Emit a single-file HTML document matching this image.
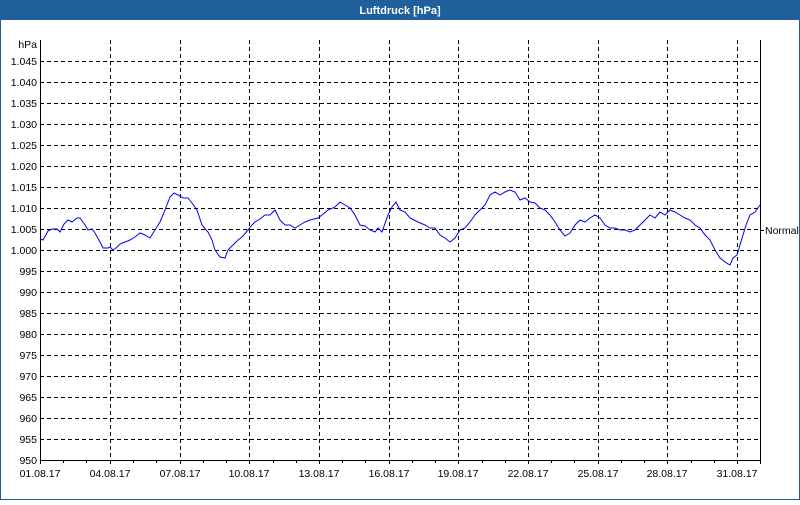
<!DOCTYPE html>
<html><head><meta charset="utf-8"><style>
body{margin:0;width:800px;height:500px;overflow:hidden;background:#fff;font-family:"Liberation Sans",sans-serif}
</style></head><body>
<svg width="800" height="500" xmlns="http://www.w3.org/2000/svg" font-family="Liberation Sans, sans-serif" font-size="10.5">
<rect x="0" y="0" width="800" height="500" fill="#fff"/>
<rect x="0.5" y="0.5" width="799" height="499" fill="none" stroke="#1f5f9a"/>
<rect x="0" y="0" width="800" height="20" fill="#1f5f9a"/>
<text x="400" y="14" text-anchor="middle" fill="#fff" font-weight="bold" font-size="11">Luftdruck [hPa]</text>
<g stroke="#000" stroke-dasharray="4,3" stroke-width="1">
<path d="M40 61.5H760M40 82.5H760M40 103.5H760M40 124.5H760M40 145.5H760M40 166.5H760M40 187.5H760M40 208.5H760M40 229.5H760M40 250.5H760M40 271.5H760M40 292.5H760M40 313.5H760M40 334.5H760M40 355.5H760M40 376.5H760M40 397.5H760M40 418.5H760M40 439.5H760"/>
<path d="M110.5 40V460M180.5 40V460M249.5 40V460M319.5 40V460M389.5 40V460M458.5 40V460M528.5 40V460M598.5 40V460M667.5 40V460M737.5 40V460"/>
</g>
<g stroke="#000" fill="none">
<path d="M40.5 40V460.5H760M760.5 40V460.5"/>
<path d="M760 230.5H764"/>
<path d="M40.5 460v4M63.5 460v3M86.5 460v3M110.5 460v4M133.5 460v3M156.5 460v3M180.5 460v4M203.5 460v3M226.5 460v3M249.5 460v4M273.5 460v3M296.5 460v3M319.5 460v4M342.5 460v3M365.5 460v3M389.5 460v4M412.5 460v3M435.5 460v3M458.5 460v4M482.5 460v3M505.5 460v3M528.5 460v4M551.5 460v3M574.5 460v3M598.5 460v4M621.5 460v3M644.5 460v3M667.5 460v4M691.5 460v3M714.5 460v3M737.5 460v4M760.5 460v4"/>
</g>
<polyline fill="none" stroke="#0000ee" stroke-width="1" points="40,239 43,240 48,231 52,229 57,229 60,232 64,224 68,220 72,222 77,218 80,218 85,225 88,230 92,229 95,233 100,242 103,248 108,248 110,247 113,250 116,248 120,244 125,242 130,240 135,237 140,233 145,235 150,238 155,230 160,222 165,210 170,197 174,193 178,195 183,198 188,198 192,203 197,210 202,225 208,232 212,240 215,250 220,257 225,258 228,250 232,246 238,240 242,237 248,230 252,225 255,222 260,219 265,215 270,215 275,210 280,220 285,225 290,225 295,228 300,225 305,222 310,220 318,218 322,215 328,210 335,207 340,202 345,205 350,208 355,215 360,225 365,226 370,230 375,232 378,228 382,232 388,215 392,207 396,202 400,210 405,212 410,218 418,222 425,225 430,228 435,228 440,235 445,238 450,242 455,238 460,230 465,228 470,222 475,215 480,210 485,205 490,195 495,192 500,195 505,192 510,190 515,192 520,200 525,198 530,202 535,203 540,208 545,210 550,215 555,222 560,230 565,236 570,233 575,225 580,220 585,222 590,218 595,215 600,218 605,225 610,228 615,228 620,230 625,230 630,232 635,230 640,225 645,220 650,215 655,218 660,212 665,215 670,210 675,212 680,215 685,218 690,220 695,225 700,228 705,235 710,240 715,250 720,258 725,262 730,265 733,258 737,255 740,245 743,235 746,225 750,215 755,212 760,205"/>
<g fill="#000" text-anchor="end">
<text x="37" y="48">hPa</text>
<text x="37" y="65">1.045</text><text x="37" y="86">1.040</text><text x="37" y="107">1.035</text><text x="37" y="128">1.030</text><text x="37" y="149">1.025</text><text x="37" y="170">1.020</text><text x="37" y="191">1.015</text><text x="37" y="212">1.010</text><text x="37" y="233">1.005</text><text x="37" y="254">1.000</text><text x="37" y="275">995</text><text x="37" y="296">990</text><text x="37" y="317">985</text><text x="37" y="338">980</text><text x="37" y="359">975</text><text x="37" y="380">970</text><text x="37" y="401">965</text><text x="37" y="422">960</text><text x="37" y="443">955</text><text x="37" y="464">950</text>
</g>
<text x="765" y="234" fill="#000">Normal</text>
<g fill="#000" text-anchor="middle">
<text x="40" y="477">01.08.17</text><text x="110" y="477">04.08.17</text><text x="180" y="477">07.08.17</text><text x="249" y="477">10.08.17</text><text x="319" y="477">13.08.17</text><text x="389" y="477">16.08.17</text><text x="458" y="477">19.08.17</text><text x="528" y="477">22.08.17</text><text x="598" y="477">25.08.17</text><text x="667" y="477">28.08.17</text><text x="737" y="477">31.08.17</text>
</g>
</svg>
</body></html>
